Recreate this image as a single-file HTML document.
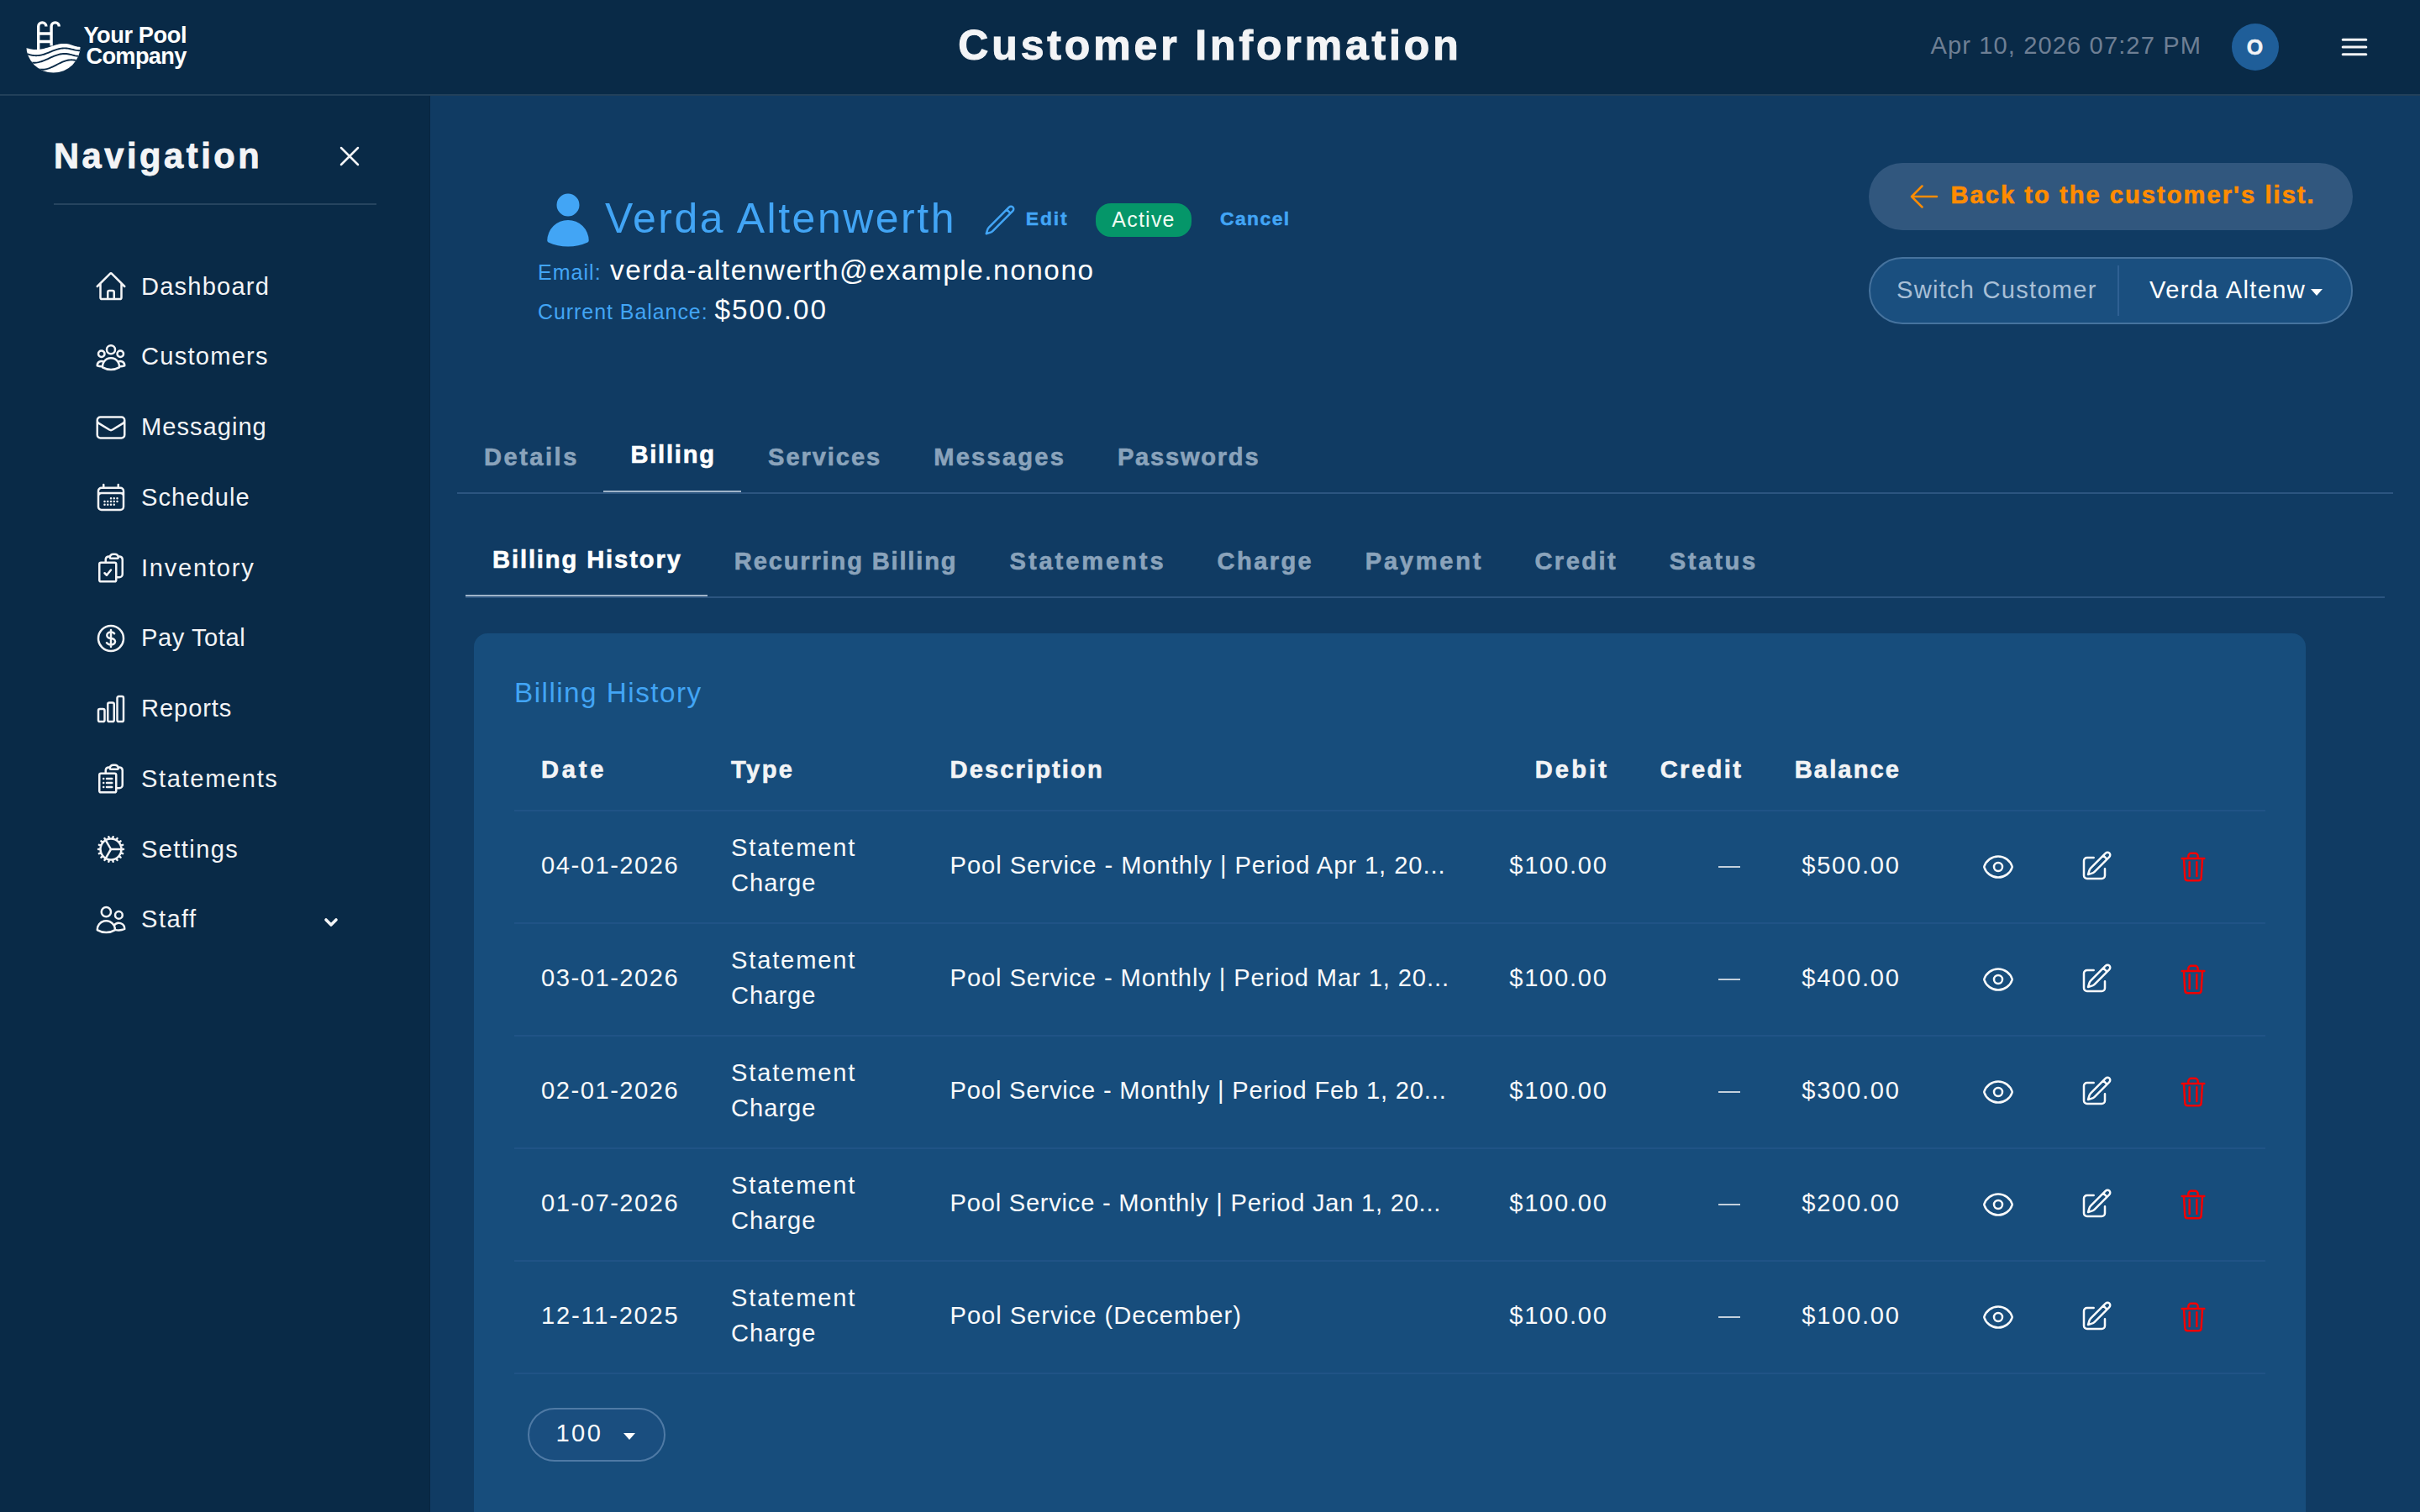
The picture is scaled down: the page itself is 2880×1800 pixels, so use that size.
<!DOCTYPE html>
<html><head><meta charset="utf-8"><title>Customer Information</title>
<style>
html{zoom:2}
html,body{margin:0;padding:0;background:#113b63;overflow:hidden}
body{width:1440px;height:900px;position:relative;font-family:"Liberation Sans",sans-serif}
.t{position:absolute;white-space:nowrap;line-height:1;}
.b,.ic{position:absolute;display:block}
</style>
<script>(function(){var z=window.innerWidth/1440;if(z>0){document.documentElement.style.zoom=z;}})();</script>
</head><body>
<div class="b" style="left:0.00px;top:0.00px;width:1440.00px;height:56.00px;background:#092a47;"></div>
<div class="b" style="left:0.00px;top:56.00px;width:1440.00px;height:1.00px;background:#22405a;"></div>
<svg class="ic" style="left:12.5px;top:10px;width:40px;height:36px" viewBox="25 20 80 72">
<defs><clipPath id="bowl"><circle cx="63.5" cy="54.35" r="32.25"/></clipPath></defs>
<g fill="none" stroke="#fff" stroke-width="3.4" stroke-linecap="butt">
<path d="M45.7 59.5V31.5a4.6 4.6 0 0 1 9.2 0"/>
<path d="M61.1 54.5V31.5a4.6 4.6 0 0 1 9.2 0"/>
<path d="M45.7 40h15.4M45.7 49.5h15.4"/>
</g>
<g clip-path="url(#bowl)">
<path fill="#fff" d="M28.0 56.02 L29.5 56.52 L31.0 56.99 L32.5 57.43 L34.0 57.84 L35.5 58.20 L37.0 58.51 L38.5 58.76 L40.0 58.94 L41.5 59.05 L43.0 59.10 L44.5 59.07 L46.0 58.98 L47.5 58.81 L49.0 58.58 L50.5 58.29 L52.0 57.94 L53.5 57.55 L55.0 57.11 L56.5 56.64 L58.0 56.15 L59.5 55.65 L61.0 55.15 L62.5 54.65 L64.0 54.17 L65.5 53.71 L67.0 53.29 L68.5 52.91 L70.0 52.59 L71.5 52.32 L73.0 52.11 L74.5 51.98 L76.0 51.91 L77.5 51.92 L79.0 52.04 L80.5 52.28 L82.0 52.62 L83.5 53.04 L85.0 53.51 L86.5 54.00 L88.0 54.49 L89.5 54.94 L91.0 55.33 L92.5 55.63 L94.0 55.82 L95.5 55.90 L97.0 55.85 L98.5 55.69 L100.0 55.42 L100 100 L28 100 Z"/>
<g fill="none" stroke="#092a47" stroke-width="1.9" stroke-linejoin="round">
<polyline points="28.0,62.56 29.5,63.15 31.0,63.72 32.5,64.26 34.0,64.74 35.5,65.17 37.0,65.53 38.5,65.82 40.0,66.03 41.5,66.16 43.0,66.20 44.5,66.16 46.0,66.03 47.5,65.82 49.0,65.53 50.5,65.17 52.0,64.74 53.5,64.26 55.0,63.72 56.5,63.15 58.0,62.56 59.5,61.94 61.0,61.33 62.5,60.72 64.0,60.14 65.5,59.59 67.0,59.08 68.5,58.62 70.0,58.23 71.5,57.91 73.0,57.66 74.5,57.49 76.0,57.41 77.5,57.41 79.0,57.50 80.5,57.68 82.0,57.92 83.5,58.22 85.0,58.56 86.5,58.92 88.0,59.28 89.5,59.60 91.0,59.88 92.5,60.10 94.0,60.24 95.5,60.30 97.0,60.27 98.5,60.15 100.0,59.95"/>
<polyline points="28.0,72.18 29.5,72.74 31.0,73.25 32.5,73.69 34.0,74.06 35.5,74.36 37.0,74.58 38.5,74.71 40.0,74.75 41.5,74.71 43.0,74.58 44.5,74.36 46.0,74.06 47.5,73.69 49.0,73.25 50.5,72.74 52.0,72.18 53.5,71.57 55.0,70.93 56.5,70.26 58.0,69.58 59.5,68.89 61.0,68.21 62.5,67.55 64.0,66.92 65.5,66.33 67.0,65.78 68.5,65.30 70.0,64.88 71.5,64.53 73.0,64.26 74.5,64.07 76.0,63.97 77.5,63.96 79.0,64.04 80.5,64.22 82.0,64.49 83.5,64.82 85.0,65.19 86.5,65.58 88.0,65.96 89.5,66.31 91.0,66.60 92.5,66.81 94.0,66.93 95.5,66.94 97.0,66.86 98.5,66.68 100.0,66.41"/>
<polyline points="28.0,74.79 29.5,75.52 31.0,76.28 32.5,77.05 34.0,77.82 35.5,78.58 37.0,79.31 38.5,80.00 40.0,80.64 41.5,81.21 43.0,81.70 44.5,82.11 46.0,82.43 47.5,82.66 49.0,82.78 50.5,82.79 52.0,82.71 53.5,82.52 55.0,82.23 56.5,81.85 58.0,81.38 59.5,80.83 61.0,80.22 62.5,79.54 64.0,78.83 65.5,78.08 67.0,77.31 68.5,76.53 70.0,75.77 71.5,75.03 73.0,74.33 74.5,73.67 76.0,73.08 77.5,72.55 79.0,72.11 80.5,71.76 82.0,71.51 83.5,71.35 85.0,71.30 86.5,71.35 88.0,71.49 89.5,71.71 91.0,71.99 92.5,72.30 94.0,72.61 95.5,72.89 97.0,73.11 98.5,73.25 100.0,73.30"/>
</g></g></svg>
<span class="t" style="left:49.70px;top:14.238px;font-size:13.600px;color:#fff;font-weight:700;letter-spacing:-0.2px;">Your Pool</span>
<span class="t" style="left:51.20px;top:26.738px;font-size:13.600px;color:#fff;font-weight:700;letter-spacing:-0.32px;">Company</span>
<span class="t" style="left:720.00px;transform:translateX(-50%);top:14.971px;font-size:24.960px;color:#f3f4f6;font-weight:700;-webkit-text-stroke:0.528px currentColor;letter-spacing:1.950px;margin-right:-1.950px;">Customer Information</span>
<span class="t" style="left:1148.70px;top:19.975px;font-size:14.560px;color:#6e7f94;letter-spacing:0.554px;">Apr 10, 2026 07:27 PM</span>
<div class="b" style="left:1328px;top:14px;width:28px;height:28px;border-radius:50%;background:#1f5e99"></div>
<span class="t" style="left:1342.00px;transform:translateX(-50%);top:21.836px;font-size:12.480px;color:#f3f4f6;font-weight:700;-webkit-text-stroke:0.264px currentColor;letter-spacing:0.492px;margin-right:-0.492px;">O</span>
<svg class="ic" style="left:1391.00px;top:18.00px;width:20px;height:20px;" viewBox="0 0 24 24" fill="none" stroke="#f3f4f6" stroke-width="1.9" stroke-linecap="round" stroke-linejoin="round"><path d="M3.75 6.75h16.5M3.75 12h16.5m-16.5 5.25h16.5"/></svg>
<div class="b" style="left:0.00px;top:57.00px;width:256.00px;height:843.00px;background:#092a47;"></div>
<div class="b" style="left:255.50px;top:57.00px;width:0.50px;height:843.00px;background:#072540;"></div>
<span class="t" style="left:32.00px;top:82.743px;font-size:20.800px;color:#f3f4f6;font-weight:700;-webkit-text-stroke:0.440px currentColor;letter-spacing:1.780px;">Navigation</span>
<svg class="ic" style="left:198.00px;top:83.00px;width:20px;height:20px;" viewBox="0 0 24 24" fill="none" stroke="#f3f4f6" stroke-width="1.5" stroke-linecap="round" stroke-linejoin="round"><path d="M6 18L18 6M6 6l12 12"/></svg>
<div class="b" style="left:32.00px;top:121.00px;width:192.00px;height:1.00px;background:#26445f;"></div>
<svg class="ic" style="left:56.00px;top:160.50px;width:20px;height:20px;" viewBox="0 0 24 24" fill="none" stroke="#f3f4f6" stroke-width="1.5" stroke-linecap="round" stroke-linejoin="round"><path d="M2.25 12l8.954-8.955c.44-.439 1.152-.439 1.591 0L21.75 12M4.5 9.75v10.125c0 .621.504 1.125 1.125 1.125H9.75v-4.875c0-.621.504-1.125 1.125-1.125h2.25c.621 0 1.125.504 1.125 1.125V21h4.125c.621 0 1.125-.504 1.125-1.125V9.75M8.25 21h8.25"/></svg>
<span class="t" style="left:84.00px;top:163.275px;font-size:14.560px;color:#f3f4f6;letter-spacing:0.595px;">Dashboard</span>
<svg class="ic" style="left:56.00px;top:202.38px;width:20px;height:20px;" viewBox="0 0 24 24" fill="none" stroke="#f3f4f6" stroke-width="1.5" stroke-linecap="round" stroke-linejoin="round"><path d="M18 18.72a9.094 9.094 0 003.741-.479 3 3 0 00-4.682-2.72m.94 3.198l.001.031c0 .225-.012.447-.037.666A11.944 11.944 0 0112 21c-2.17 0-4.207-.576-5.963-1.584A6.062 6.062 0 016 18.719m12 0a5.971 5.971 0 00-.941-3.197m0 0A5.995 5.995 0 0012 12.75a5.995 5.995 0 00-5.058 2.772m0 0a3 3 0 00-4.681 2.72 8.986 8.986 0 003.74.477m.94-3.197a5.971 5.971 0 00-.94 3.197M15 6.75a3 3 0 11-6 0 3 3 0 016 0zm6 3a2.25 2.25 0 11-4.5 0 2.25 2.25 0 014.5 0zm-13.5 0a2.25 2.25 0 11-4.5 0 2.25 2.25 0 014.5 0z"/></svg>
<span class="t" style="left:84.00px;top:205.155px;font-size:14.560px;color:#f3f4f6;letter-spacing:0.617px;">Customers</span>
<svg class="ic" style="left:56.00px;top:244.26px;width:20px;height:20px;" viewBox="0 0 24 24" fill="none" stroke="#f3f4f6" stroke-width="1.5" stroke-linecap="round" stroke-linejoin="round"><path d="M21.75 6.75v10.5a2.25 2.25 0 01-2.25 2.25h-15a2.25 2.25 0 01-2.25-2.25V6.75m19.5 0A2.25 2.25 0 0019.5 4.5h-15a2.25 2.25 0 00-2.25 2.25m19.5 0v.243a2.25 2.25 0 01-1.07 1.916l-7.5 4.615a2.25 2.25 0 01-2.36 0L3.32 8.91a2.25 2.25 0 01-1.07-1.916V6.75"/></svg>
<span class="t" style="left:84.00px;top:247.035px;font-size:14.560px;color:#f3f4f6;letter-spacing:0.501px;">Messaging</span>
<svg class="ic" style="left:56.00px;top:286.14px;width:20px;height:20px;" viewBox="0 0 24 24" fill="none" stroke="#f3f4f6" stroke-width="1.5" stroke-linecap="round" stroke-linejoin="round"><path d="M6.75 3v2.25M17.25 3v2.25M3 18.75V7.5a2.25 2.25 0 012.25-2.25h13.5A2.25 2.25 0 0121 7.5v11.25m-18 0A2.25 2.25 0 005.25 21h13.5A2.25 2.25 0 0021 18.75m-18 0v-7.5A2.25 2.25 0 015.25 9h13.5A2.25 2.25 0 0121 11.25v7.5m-9-6h.008v.008H12v-.008zM12 15h.008v.008H12V15zm0 2.25h.008v.008H12v-.008zM9.75 15h.008v.008H9.75V15zm0 2.25h.008v.008H9.75v-.008zM7.5 15h.008v.008H7.5V15zm0 2.25h.008v.008H7.5v-.008zm6.75-4.5h.008v.008h-.008v-.008zm0 2.25h.008v.008h-.008V15zm0 2.25h.008v.008h-.008v-.008zm2.25-4.5h.008v.008H16.5v-.008zm0 2.25h.008v.008H16.5V15z"/></svg>
<span class="t" style="left:84.00px;top:288.915px;font-size:14.560px;color:#f3f4f6;letter-spacing:0.520px;">Schedule</span>
<svg class="ic" style="left:56.00px;top:328.02px;width:20px;height:20px;" viewBox="0 0 24 24" fill="none" stroke="#f3f4f6" stroke-width="1.5" stroke-linecap="round" stroke-linejoin="round"><path d="M11.35 3.836c-.065.21-.1.433-.1.664 0 .414.336.75.75.75h4.5a.75.75 0 00.75-.75 2.25 2.25 0 00-.1-.664m-5.8 0A2.251 2.251 0 0113.5 2.25H15c1.012 0 1.867.668 2.15 1.586m-5.8 0c-.376.023-.75.05-1.124.08C9.095 4.01 8.25 4.973 8.25 6.108V8.25m8.9-4.414c.376.023.75.05 1.124.08 1.131.094 1.976 1.057 1.976 2.192V16.5A2.25 2.25 0 0118 18.75h-2.25m-7.5-10.5H4.875c-.621 0-1.125.504-1.125 1.125v11.25c0 .621.504 1.125 1.125 1.125h9.75c.621 0 1.125-.504 1.125-1.125V18.75m-7.5-10.5h6.375c.621 0 1.125.504 1.125 1.125v9.375m-8.25-3l1.5 1.5 3-3.75"/></svg>
<span class="t" style="left:84.00px;top:330.795px;font-size:14.560px;color:#f3f4f6;letter-spacing:0.875px;">Inventory</span>
<svg class="ic" style="left:56.00px;top:369.90px;width:20px;height:20px;" viewBox="0 0 24 24" fill="none" stroke="#f3f4f6" stroke-width="1.5" stroke-linecap="round" stroke-linejoin="round"><path d="M12 6v12m-3-2.818l.879.659c1.171.879 3.07.879 4.242 0 1.172-.879 1.172-2.303 0-3.182C13.536 12.219 12.768 12 12 12c-.725 0-1.45-.22-2.003-.659-1.106-.879-1.106-2.303 0-3.182s2.9-.879 4.006 0l.415.33M21 12a9 9 0 11-18 0 9 9 0 0118 0z"/></svg>
<span class="t" style="left:84.00px;top:372.675px;font-size:14.560px;color:#f3f4f6;letter-spacing:0.277px;">Pay Total</span>
<svg class="ic" style="left:56.00px;top:411.78px;width:20px;height:20px;" viewBox="0 0 24 24" fill="none" stroke="#f3f4f6" stroke-width="1.5" stroke-linecap="round" stroke-linejoin="round"><path d="M3 13.125C3 12.504 3.504 12 4.125 12h2.25c.621 0 1.125.504 1.125 1.125v6.75C7.5 20.496 6.996 21 6.375 21h-2.25A1.125 1.125 0 013 19.875v-6.75zM9.75 8.625c0-.621.504-1.125 1.125-1.125h2.25c.621 0 1.125.504 1.125 1.125v11.25c0 .621-.504 1.125-1.125 1.125h-2.25a1.125 1.125 0 01-1.125-1.125V8.625zM16.5 4.125c0-.621.504-1.125 1.125-1.125h2.25C20.496 3 21 3.504 21 4.125v15.75c0 .621-.504 1.125-1.125 1.125h-2.25a1.125 1.125 0 01-1.125-1.125V4.125z"/></svg>
<span class="t" style="left:84.00px;top:414.555px;font-size:14.560px;color:#f3f4f6;letter-spacing:0.456px;">Reports</span>
<svg class="ic" style="left:56.00px;top:453.66px;width:20px;height:20px;" viewBox="0 0 24 24" fill="none" stroke="#f3f4f6" stroke-width="1.5" stroke-linecap="round" stroke-linejoin="round"><path d="M9 12h3.75M9 15h3.75M9 18h3.75m3 .75H18a2.25 2.25 0 002.25-2.25V6.108c0-1.135-.845-2.098-1.976-2.192a48.424 48.424 0 00-1.123-.08m-5.801 0c-.065.21-.1.433-.1.664 0 .414.336.75.75.75h4.5a.75.75 0 00.75-.75 2.25 2.25 0 00-.1-.664m-5.8 0A2.251 2.251 0 0113.5 2.25H15c1.012 0 1.867.668 2.15 1.586m-5.8 0c-.376.023-.75.05-1.124.08C9.095 4.01 8.25 4.973 8.25 6.108V8.25m0 0H4.875c-.621 0-1.125.504-1.125 1.125v11.25c0 .621.504 1.125 1.125 1.125h9.75c.621 0 1.125-.504 1.125-1.125V9.375c0-.621-.504-1.125-1.125-1.125H8.25zM6.75 12h.008v.008H6.75V12zm0 3h.008v.008H6.75V15zm0 3h.008v.008H6.75V18z"/></svg>
<span class="t" style="left:84.00px;top:456.435px;font-size:14.560px;color:#f3f4f6;letter-spacing:0.816px;">Statements</span>
<svg class="ic" style="left:56.00px;top:495.54px;width:20px;height:20px;" viewBox="0 0 24 24" fill="none" stroke="#f3f4f6" stroke-width="1.5" stroke-linecap="round" stroke-linejoin="round"><path d="M4.5 12a7.5 7.5 0 0015 0m-15 0a7.5 7.5 0 1115 0m-15 0H3m16.5 0H21m-1.5 0H12m-8.457 3.077l1.41-.513m14.095-5.13l1.41-.513M5.106 17.785l1.15-.964m11.49-9.642l1.149-.964M7.501 19.795l.75-1.3m7.5-12.99l.75-1.3m-6.063 16.658l.26-1.477m2.605-14.772l.26-1.477m0 17.726l-.26-1.477M10.698 4.614l-.26-1.477M16.5 19.794l-.75-1.299M7.5 4.205L12 12m6.894 5.785l-1.149-.964M6.256 7.178l-1.15-.964m15.352 8.864l-1.41-.513M4.954 9.435l-1.41-.514M12.002 12l-3.75 6.495"/></svg>
<span class="t" style="left:84.00px;top:498.315px;font-size:14.560px;color:#f3f4f6;letter-spacing:0.690px;">Settings</span>
<svg class="ic" style="left:56.00px;top:537.42px;width:20px;height:20px;" viewBox="0 0 24 24" fill="none" stroke="#f3f4f6" stroke-width="1.5" stroke-linecap="round" stroke-linejoin="round"><path d="M15 19.128a9.38 9.38 0 002.625.372 9.337 9.337 0 004.121-.952 4.125 4.125 0 00-7.533-2.493M15 19.128v-.003c0-1.113-.285-2.16-.786-3.07M15 19.128v.106A12.318 12.318 0 018.624 21c-2.331 0-4.512-.645-6.374-1.766l-.001-.109a6.375 6.375 0 0111.964-3.07M12 6.375a3.375 3.375 0 11-6.75 0 3.375 3.375 0 016.75 0zm8.25 2.25a2.625 2.625 0 11-5.25 0 2.625 2.625 0 015.25 0z"/></svg>
<span class="t" style="left:84.00px;top:540.195px;font-size:14.560px;color:#f3f4f6;letter-spacing:0.732px;">Staff</span>
<svg class="ic" style="left:192.00px;top:544.00px;width:10px;height:10px;" viewBox="0 0 10 10" fill="none" stroke="#f3f4f6" stroke-width="1.8" stroke-linecap="round" stroke-linejoin="round"><path d="M2 3.5l3 3 3-3"/></svg>
<div class="b" style="left:256.00px;top:57.00px;width:1184.00px;height:843.00px;background:#103b63;"></div>
<svg class="ic" style="left:320.00px;top:112.75px;width:36px;height:36px;" viewBox="0 0 24 24" fill="#42a5f5" stroke="none" stroke-width="0" stroke-linecap="round" stroke-linejoin="round"><path fill-rule="evenodd" d="M7.5 6a4.5 4.5 0 119 0 4.5 4.5 0 01-9 0zM3.751 20.105a8.25 8.25 0 0116.498 0 .75.75 0 01-.437.695A18.683 18.683 0 0112 22.5c-2.786 0-5.433-.608-7.812-1.7a.75.75 0 01-.437-.695z"/></svg>
<span class="t" style="left:360.00px;top:118.071px;font-size:24.960px;color:#42a5f5;letter-spacing:1.269px;">Verda Altenwerth</span>
<svg class="ic" style="left:585.00px;top:121.00px;width:20px;height:20px;" viewBox="0 0 24 24" fill="none" stroke="#42a5f5" stroke-width="1.5" stroke-linecap="round" stroke-linejoin="round"><path d="M16.862 4.487l1.687-1.688a1.875 1.875 0 112.652 2.652L6.832 19.82a4.5 4.5 0 01-1.897 1.13l-2.685.8.8-2.685a4.5 4.5 0 011.13-1.897L16.863 4.487zm0 0L19.5 7.125"/></svg>
<span class="t" style="left:610.40px;top:124.466px;font-size:11.440px;color:#42a5f5;font-weight:700;-webkit-text-stroke:0.242px currentColor;letter-spacing:0.938px;">Edit</span>
<div class="b" style="left:652px;top:121px;width:57px;height:20px;border-radius:9px;background:#059669"></div>
<span class="t" style="left:680.50px;transform:translateX(-50%);top:124.436px;font-size:12.480px;color:#effcf3;letter-spacing:0.630px;margin-right:-0.630px;">Active</span>
<span class="t" style="left:726.00px;top:124.466px;font-size:11.440px;color:#42a5f5;font-weight:700;-webkit-text-stroke:0.242px currentColor;letter-spacing:0.714px;">Cancel</span>
<span class="t" style="left:320.00px;top:155.786px;font-size:12.480px;color:#42a5f5;letter-spacing:0.534px;">Email:</span>
<span class="t" style="left:363.00px;top:152.264px;font-size:16.640px;color:#fff;letter-spacing:0.792px;">verda-altenwerth@example.nonono</span>
<span class="t" style="left:320.00px;top:179.686px;font-size:12.480px;color:#42a5f5;letter-spacing:0.478px;">Current Balance:</span>
<span class="t" style="left:425.30px;top:176.164px;font-size:16.640px;color:#fff;letter-spacing:1.007px;">$500.00</span>
<div class="b" style="left:1112px;top:97px;width:288px;height:40px;border-radius:20px;background:#31577e"></div>
<svg class="ic" style="left:1135.00px;top:107.00px;width:20px;height:20px;" viewBox="0 0 24 24" fill="none" stroke="#ff8c00" stroke-width="1.5" stroke-linecap="round" stroke-linejoin="round"><path d="M10.5 19.5L3 12m0 0l7.5-7.5M3 12h18"/></svg>
<span class="t" style="left:1160.70px;top:109.225px;font-size:14.560px;color:#ff8c00;font-weight:700;-webkit-text-stroke:0.308px currentColor;letter-spacing:1.017px;">Back to the customer's list.</span>
<div class="b" style="left:1112px;top:153px;width:288px;height:40px;border-radius:20px;background:#1a4f7f;box-sizing:border-box;border:1px solid #46739e"></div>
<span class="t" style="left:1128.50px;top:165.275px;font-size:14.560px;color:#a8bfd6;letter-spacing:0.624px;">Switch Customer</span>
<div class="b" style="left:1260.00px;top:158.00px;width:1.00px;height:30.00px;background:#2f6093;"></div>
<span class="t" style="left:1279.00px;top:165.275px;font-size:14.560px;color:#fff;letter-spacing:0.678px;">Verda Altenw</span>
<div class="b" style="left:1375px;top:172px;width:0;height:0;border-left:3.75px solid transparent;border-right:3.75px solid transparent;border-top:4px solid #fff"></div>
<span class="t" style="left:288.00px;top:264.775px;font-size:14.560px;color:#8aa3bb;font-weight:700;-webkit-text-stroke:0.308px currentColor;letter-spacing:1.242px;">Details</span>
<span class="t" style="left:375.19px;top:263.725px;font-size:14.560px;color:#fff;font-weight:700;-webkit-text-stroke:0.308px currentColor;letter-spacing:0.898px;">Billing</span>
<div class="b" style="left:359.19px;top:292.00px;width:81.86px;height:1.00px;background:#9fb4c9;"></div>
<span class="t" style="left:457.05px;top:264.775px;font-size:14.560px;color:#8aa3bb;font-weight:700;-webkit-text-stroke:0.308px currentColor;letter-spacing:0.950px;">Services</span>
<span class="t" style="left:555.60px;top:264.775px;font-size:14.560px;color:#8aa3bb;font-weight:700;-webkit-text-stroke:0.308px currentColor;letter-spacing:1.115px;">Messages</span>
<span class="t" style="left:664.99px;top:264.775px;font-size:14.560px;color:#8aa3bb;font-weight:700;-webkit-text-stroke:0.308px currentColor;letter-spacing:0.869px;">Passwords</span>
<div class="b" style="left:272.00px;top:293.00px;width:1152.00px;height:1.00px;background:#2c5580;"></div>
<span class="t" style="left:293.00px;top:325.875px;font-size:14.560px;color:#fff;font-weight:700;-webkit-text-stroke:0.308px currentColor;letter-spacing:0.947px;">Billing History</span>
<div class="b" style="left:277.00px;top:354.00px;width:143.92px;height:1.00px;background:#9fb4c9;"></div>
<span class="t" style="left:436.92px;top:327.175px;font-size:14.560px;color:#8aa3bb;font-weight:700;-webkit-text-stroke:0.308px currentColor;letter-spacing:0.913px;">Recurring Billing</span>
<span class="t" style="left:600.80px;top:327.175px;font-size:14.560px;color:#8aa3bb;font-weight:700;-webkit-text-stroke:0.308px currentColor;letter-spacing:1.448px;">Statements</span>
<span class="t" style="left:724.30px;top:327.175px;font-size:14.560px;color:#8aa3bb;font-weight:700;-webkit-text-stroke:0.308px currentColor;letter-spacing:1.192px;">Charge</span>
<span class="t" style="left:812.41px;top:327.175px;font-size:14.560px;color:#8aa3bb;font-weight:700;-webkit-text-stroke:0.308px currentColor;letter-spacing:1.350px;">Payment</span>
<span class="t" style="left:913.19px;top:327.175px;font-size:14.560px;color:#8aa3bb;font-weight:700;-webkit-text-stroke:0.308px currentColor;letter-spacing:1.227px;">Credit</span>
<span class="t" style="left:993.38px;top:327.175px;font-size:14.560px;color:#8aa3bb;font-weight:700;-webkit-text-stroke:0.308px currentColor;letter-spacing:1.347px;">Status</span>
<div class="b" style="left:277.00px;top:355.00px;width:1142.00px;height:1.00px;background:#2c5580;"></div>
<div class="b" style="left:282px;top:377px;width:1090px;height:600px;border-radius:8px;background:#174d7c"></div>
<span class="t" style="left:306.00px;top:403.914px;font-size:16.640px;color:#42a5f5;letter-spacing:0.737px;">Billing History</span>
<span class="t" style="left:322.00px;top:451.075px;font-size:14.560px;color:#f3f4f6;font-weight:700;-webkit-text-stroke:0.308px currentColor;letter-spacing:1.901px;">Date</span>
<span class="t" style="left:435.00px;top:451.075px;font-size:14.560px;color:#f3f4f6;font-weight:700;-webkit-text-stroke:0.308px currentColor;letter-spacing:1.214px;">Type</span>
<span class="t" style="left:565.30px;top:451.075px;font-size:14.560px;color:#f3f4f6;font-weight:700;-webkit-text-stroke:0.308px currentColor;letter-spacing:1.048px;">Description</span>
<span class="t" style="right:484.00px;top:451.075px;font-size:14.560px;color:#f3f4f6;font-weight:700;-webkit-text-stroke:0.308px currentColor;letter-spacing:1.561px;margin-right:-1.561px;">Debit</span>
<span class="t" style="right:404.00px;top:451.075px;font-size:14.560px;color:#f3f4f6;font-weight:700;-webkit-text-stroke:0.308px currentColor;letter-spacing:1.227px;margin-right:-1.227px;">Credit</span>
<span class="t" style="right:310.00px;top:451.075px;font-size:14.560px;color:#f3f4f6;font-weight:700;-webkit-text-stroke:0.308px currentColor;letter-spacing:1.049px;margin-right:-1.049px;">Balance</span>
<div class="b" style="left:306.00px;top:482.00px;width:1042.00px;height:1.00px;background:#205386;"></div>
<span class="t" style="left:322.00px;top:508.075px;font-size:14.560px;color:#f9fafb;letter-spacing:0.768px;">04-01-2026</span>
<span class="t" style="left:435.00px;top:497.575px;font-size:14.560px;color:#f9fafb;letter-spacing:0.916px;">Statement</span>
<span class="t" style="left:435.00px;top:518.575px;font-size:14.560px;color:#f9fafb;letter-spacing:0.500px;">Charge</span>
<span class="t" style="left:565.30px;top:508.075px;font-size:14.560px;color:#f9fafb;letter-spacing:0.478px;">Pool Service - Monthly | Period Apr 1, 20...</span>
<span class="t" style="right:484.00px;top:508.075px;font-size:14.560px;color:#f9fafb;letter-spacing:0.880px;margin-right:-0.880px;">$100.00</span>
<div class="b" style="left:1022.70px;top:515.40px;width:12.60px;height:1.00px;background:#c3d0dc;"></div>
<span class="t" style="right:310.00px;top:508.075px;font-size:14.560px;color:#f9fafb;letter-spacing:0.880px;margin-right:-0.880px;">$500.00</span>
<svg class="ic" style="left:1179.00px;top:506.00px;width:20px;height:20px;" viewBox="0 0 24 24" fill="none" stroke="#f9fafb" stroke-width="1.5" stroke-linecap="round" stroke-linejoin="round"><path d="M2.036 12.322a1.012 1.012 0 010-.639C3.423 7.51 7.36 4.5 12 4.5c4.638 0 8.573 3.007 9.963 7.178.07.207.07.431 0 .639C20.577 16.49 16.64 19.5 12 19.5c-4.638 0-8.573-3.007-9.963-7.178z"/><path d="M15 12a3 3 0 11-6 0 3 3 0 016 0z"/></svg>
<svg class="ic" style="left:1237.30px;top:505.50px;width:20px;height:20px;" viewBox="0 0 24 24" fill="none" stroke="#f9fafb" stroke-width="1.5" stroke-linecap="round" stroke-linejoin="round"><path d="M16.862 4.487l1.687-1.688a1.875 1.875 0 112.652 2.652L10.582 16.07a4.5 4.5 0 01-1.897 1.13L6 18l.8-2.685a4.5 4.5 0 011.13-1.897l8.932-8.931zm0 0L19.5 7.125M18 14v4.75A2.25 2.25 0 0115.75 21H5.25A2.25 2.25 0 013 18.75V8.25A2.25 2.25 0 015.25 6H10"/></svg>
<svg class="ic" style="left:1295.00px;top:506.00px;width:20px;height:20px;" viewBox="0 0 24 24" fill="none" stroke="#f20000" stroke-width="1.5" stroke-linecap="round" stroke-linejoin="round"><path d="M4 6h16M5.4 6.2l.8 13.7a2 2 0 002 1.9h7.6a2 2 0 002-1.9l.8-13.7M8.6 6V4.3a2 2 0 012-2h2.8a2 2 0 012 2V6M9.4 8.5v10.1M14.6 8.5v10.1"/></svg>
<div class="b" style="left:306.00px;top:549.00px;width:1042.00px;height:1.00px;background:#205386;"></div>
<span class="t" style="left:322.00px;top:575.075px;font-size:14.560px;color:#f9fafb;letter-spacing:0.768px;">03-01-2026</span>
<span class="t" style="left:435.00px;top:564.575px;font-size:14.560px;color:#f9fafb;letter-spacing:0.916px;">Statement</span>
<span class="t" style="left:435.00px;top:585.575px;font-size:14.560px;color:#f9fafb;letter-spacing:0.500px;">Charge</span>
<span class="t" style="left:565.30px;top:575.075px;font-size:14.560px;color:#f9fafb;letter-spacing:0.454px;">Pool Service - Monthly | Period Mar 1, 20...</span>
<span class="t" style="right:484.00px;top:575.075px;font-size:14.560px;color:#f9fafb;letter-spacing:0.880px;margin-right:-0.880px;">$100.00</span>
<div class="b" style="left:1022.70px;top:582.40px;width:12.60px;height:1.00px;background:#c3d0dc;"></div>
<span class="t" style="right:310.00px;top:575.075px;font-size:14.560px;color:#f9fafb;letter-spacing:0.880px;margin-right:-0.880px;">$400.00</span>
<svg class="ic" style="left:1179.00px;top:573.00px;width:20px;height:20px;" viewBox="0 0 24 24" fill="none" stroke="#f9fafb" stroke-width="1.5" stroke-linecap="round" stroke-linejoin="round"><path d="M2.036 12.322a1.012 1.012 0 010-.639C3.423 7.51 7.36 4.5 12 4.5c4.638 0 8.573 3.007 9.963 7.178.07.207.07.431 0 .639C20.577 16.49 16.64 19.5 12 19.5c-4.638 0-8.573-3.007-9.963-7.178z"/><path d="M15 12a3 3 0 11-6 0 3 3 0 016 0z"/></svg>
<svg class="ic" style="left:1237.30px;top:572.50px;width:20px;height:20px;" viewBox="0 0 24 24" fill="none" stroke="#f9fafb" stroke-width="1.5" stroke-linecap="round" stroke-linejoin="round"><path d="M16.862 4.487l1.687-1.688a1.875 1.875 0 112.652 2.652L10.582 16.07a4.5 4.5 0 01-1.897 1.13L6 18l.8-2.685a4.5 4.5 0 011.13-1.897l8.932-8.931zm0 0L19.5 7.125M18 14v4.75A2.25 2.25 0 0115.75 21H5.25A2.25 2.25 0 013 18.75V8.25A2.25 2.25 0 015.25 6H10"/></svg>
<svg class="ic" style="left:1295.00px;top:573.00px;width:20px;height:20px;" viewBox="0 0 24 24" fill="none" stroke="#f20000" stroke-width="1.5" stroke-linecap="round" stroke-linejoin="round"><path d="M4 6h16M5.4 6.2l.8 13.7a2 2 0 002 1.9h7.6a2 2 0 002-1.9l.8-13.7M8.6 6V4.3a2 2 0 012-2h2.8a2 2 0 012 2V6M9.4 8.5v10.1M14.6 8.5v10.1"/></svg>
<div class="b" style="left:306.00px;top:616.00px;width:1042.00px;height:1.00px;background:#205386;"></div>
<span class="t" style="left:322.00px;top:642.075px;font-size:14.560px;color:#f9fafb;letter-spacing:0.768px;">02-01-2026</span>
<span class="t" style="left:435.00px;top:631.575px;font-size:14.560px;color:#f9fafb;letter-spacing:0.916px;">Statement</span>
<span class="t" style="left:435.00px;top:652.575px;font-size:14.560px;color:#f9fafb;letter-spacing:0.500px;">Charge</span>
<span class="t" style="left:565.30px;top:642.075px;font-size:14.560px;color:#f9fafb;letter-spacing:0.416px;">Pool Service - Monthly | Period Feb 1, 20...</span>
<span class="t" style="right:484.00px;top:642.075px;font-size:14.560px;color:#f9fafb;letter-spacing:0.880px;margin-right:-0.880px;">$100.00</span>
<div class="b" style="left:1022.70px;top:649.40px;width:12.60px;height:1.00px;background:#c3d0dc;"></div>
<span class="t" style="right:310.00px;top:642.075px;font-size:14.560px;color:#f9fafb;letter-spacing:0.880px;margin-right:-0.880px;">$300.00</span>
<svg class="ic" style="left:1179.00px;top:640.00px;width:20px;height:20px;" viewBox="0 0 24 24" fill="none" stroke="#f9fafb" stroke-width="1.5" stroke-linecap="round" stroke-linejoin="round"><path d="M2.036 12.322a1.012 1.012 0 010-.639C3.423 7.51 7.36 4.5 12 4.5c4.638 0 8.573 3.007 9.963 7.178.07.207.07.431 0 .639C20.577 16.49 16.64 19.5 12 19.5c-4.638 0-8.573-3.007-9.963-7.178z"/><path d="M15 12a3 3 0 11-6 0 3 3 0 016 0z"/></svg>
<svg class="ic" style="left:1237.30px;top:639.50px;width:20px;height:20px;" viewBox="0 0 24 24" fill="none" stroke="#f9fafb" stroke-width="1.5" stroke-linecap="round" stroke-linejoin="round"><path d="M16.862 4.487l1.687-1.688a1.875 1.875 0 112.652 2.652L10.582 16.07a4.5 4.5 0 01-1.897 1.13L6 18l.8-2.685a4.5 4.5 0 011.13-1.897l8.932-8.931zm0 0L19.5 7.125M18 14v4.75A2.25 2.25 0 0115.75 21H5.25A2.25 2.25 0 013 18.75V8.25A2.25 2.25 0 015.25 6H10"/></svg>
<svg class="ic" style="left:1295.00px;top:640.00px;width:20px;height:20px;" viewBox="0 0 24 24" fill="none" stroke="#f20000" stroke-width="1.5" stroke-linecap="round" stroke-linejoin="round"><path d="M4 6h16M5.4 6.2l.8 13.7a2 2 0 002 1.9h7.6a2 2 0 002-1.9l.8-13.7M8.6 6V4.3a2 2 0 012-2h2.8a2 2 0 012 2V6M9.4 8.5v10.1M14.6 8.5v10.1"/></svg>
<div class="b" style="left:306.00px;top:683.00px;width:1042.00px;height:1.00px;background:#205386;"></div>
<span class="t" style="left:322.00px;top:709.075px;font-size:14.560px;color:#f9fafb;letter-spacing:0.768px;">01-07-2026</span>
<span class="t" style="left:435.00px;top:698.575px;font-size:14.560px;color:#f9fafb;letter-spacing:0.916px;">Statement</span>
<span class="t" style="left:435.00px;top:719.575px;font-size:14.560px;color:#f9fafb;letter-spacing:0.500px;">Charge</span>
<span class="t" style="left:565.30px;top:709.075px;font-size:14.560px;color:#f9fafb;letter-spacing:0.379px;">Pool Service - Monthly | Period Jan 1, 20...</span>
<span class="t" style="right:484.00px;top:709.075px;font-size:14.560px;color:#f9fafb;letter-spacing:0.880px;margin-right:-0.880px;">$100.00</span>
<div class="b" style="left:1022.70px;top:716.40px;width:12.60px;height:1.00px;background:#c3d0dc;"></div>
<span class="t" style="right:310.00px;top:709.075px;font-size:14.560px;color:#f9fafb;letter-spacing:0.880px;margin-right:-0.880px;">$200.00</span>
<svg class="ic" style="left:1179.00px;top:707.00px;width:20px;height:20px;" viewBox="0 0 24 24" fill="none" stroke="#f9fafb" stroke-width="1.5" stroke-linecap="round" stroke-linejoin="round"><path d="M2.036 12.322a1.012 1.012 0 010-.639C3.423 7.51 7.36 4.5 12 4.5c4.638 0 8.573 3.007 9.963 7.178.07.207.07.431 0 .639C20.577 16.49 16.64 19.5 12 19.5c-4.638 0-8.573-3.007-9.963-7.178z"/><path d="M15 12a3 3 0 11-6 0 3 3 0 016 0z"/></svg>
<svg class="ic" style="left:1237.30px;top:706.50px;width:20px;height:20px;" viewBox="0 0 24 24" fill="none" stroke="#f9fafb" stroke-width="1.5" stroke-linecap="round" stroke-linejoin="round"><path d="M16.862 4.487l1.687-1.688a1.875 1.875 0 112.652 2.652L10.582 16.07a4.5 4.5 0 01-1.897 1.13L6 18l.8-2.685a4.5 4.5 0 011.13-1.897l8.932-8.931zm0 0L19.5 7.125M18 14v4.75A2.25 2.25 0 0115.75 21H5.25A2.25 2.25 0 013 18.75V8.25A2.25 2.25 0 015.25 6H10"/></svg>
<svg class="ic" style="left:1295.00px;top:707.00px;width:20px;height:20px;" viewBox="0 0 24 24" fill="none" stroke="#f20000" stroke-width="1.5" stroke-linecap="round" stroke-linejoin="round"><path d="M4 6h16M5.4 6.2l.8 13.7a2 2 0 002 1.9h7.6a2 2 0 002-1.9l.8-13.7M8.6 6V4.3a2 2 0 012-2h2.8a2 2 0 012 2V6M9.4 8.5v10.1M14.6 8.5v10.1"/></svg>
<div class="b" style="left:306.00px;top:750.00px;width:1042.00px;height:1.00px;background:#205386;"></div>
<span class="t" style="left:322.00px;top:776.075px;font-size:14.560px;color:#f9fafb;letter-spacing:0.888px;">12-11-2025</span>
<span class="t" style="left:435.00px;top:765.575px;font-size:14.560px;color:#f9fafb;letter-spacing:0.916px;">Statement</span>
<span class="t" style="left:435.00px;top:786.575px;font-size:14.560px;color:#f9fafb;letter-spacing:0.500px;">Charge</span>
<span class="t" style="left:565.30px;top:776.075px;font-size:14.560px;color:#f9fafb;letter-spacing:0.479px;">Pool Service (December)</span>
<span class="t" style="right:484.00px;top:776.075px;font-size:14.560px;color:#f9fafb;letter-spacing:0.880px;margin-right:-0.880px;">$100.00</span>
<div class="b" style="left:1022.70px;top:783.40px;width:12.60px;height:1.00px;background:#c3d0dc;"></div>
<span class="t" style="right:310.00px;top:776.075px;font-size:14.560px;color:#f9fafb;letter-spacing:0.880px;margin-right:-0.880px;">$100.00</span>
<svg class="ic" style="left:1179.00px;top:774.00px;width:20px;height:20px;" viewBox="0 0 24 24" fill="none" stroke="#f9fafb" stroke-width="1.5" stroke-linecap="round" stroke-linejoin="round"><path d="M2.036 12.322a1.012 1.012 0 010-.639C3.423 7.51 7.36 4.5 12 4.5c4.638 0 8.573 3.007 9.963 7.178.07.207.07.431 0 .639C20.577 16.49 16.64 19.5 12 19.5c-4.638 0-8.573-3.007-9.963-7.178z"/><path d="M15 12a3 3 0 11-6 0 3 3 0 016 0z"/></svg>
<svg class="ic" style="left:1237.30px;top:773.50px;width:20px;height:20px;" viewBox="0 0 24 24" fill="none" stroke="#f9fafb" stroke-width="1.5" stroke-linecap="round" stroke-linejoin="round"><path d="M16.862 4.487l1.687-1.688a1.875 1.875 0 112.652 2.652L10.582 16.07a4.5 4.5 0 01-1.897 1.13L6 18l.8-2.685a4.5 4.5 0 011.13-1.897l8.932-8.931zm0 0L19.5 7.125M18 14v4.75A2.25 2.25 0 0115.75 21H5.25A2.25 2.25 0 013 18.75V8.25A2.25 2.25 0 015.25 6H10"/></svg>
<svg class="ic" style="left:1295.00px;top:774.00px;width:20px;height:20px;" viewBox="0 0 24 24" fill="none" stroke="#f20000" stroke-width="1.5" stroke-linecap="round" stroke-linejoin="round"><path d="M4 6h16M5.4 6.2l.8 13.7a2 2 0 002 1.9h7.6a2 2 0 002-1.9l.8-13.7M8.6 6V4.3a2 2 0 012-2h2.8a2 2 0 012 2V6M9.4 8.5v10.1M14.6 8.5v10.1"/></svg>
<div class="b" style="left:306.00px;top:817.00px;width:1042.00px;height:1.00px;background:#205386;"></div>
<div class="b" style="left:314px;top:838px;width:82px;height:32px;border-radius:16px;box-sizing:border-box;border:1px solid #4f7aa5;background:#1a4e7f"></div>
<span class="t" style="left:330.70px;top:845.875px;font-size:14.560px;color:#f9fafb;letter-spacing:1.219px;">100</span>
<div class="b" style="left:371px;top:853px;width:0;height:0;border-left:3.75px solid transparent;border-right:3.75px solid transparent;border-top:4.2px solid #fff"></div>
</body></html>
